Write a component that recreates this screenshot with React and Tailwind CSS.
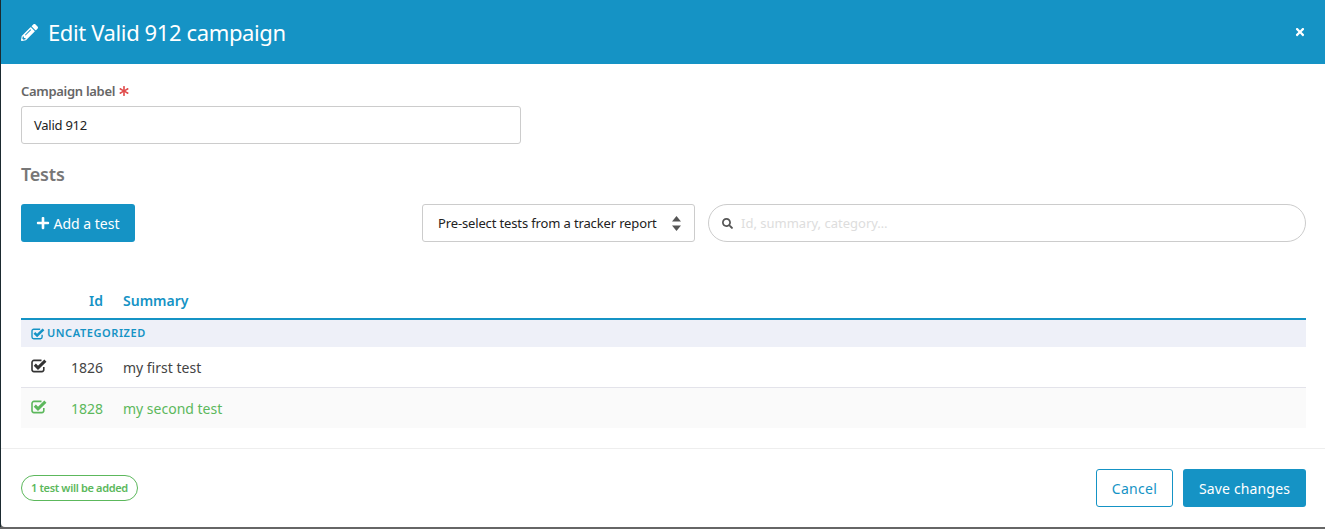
import React from "react";
import { FaPencilAlt, FaPlus, FaSearch, FaTimes, FaAsterisk } from "react-icons/fa";

function CheckBox({ className }) {
  return (
    <svg viewBox="0 0 16 14" className={className} fill="none">
      <path
        d="M12.8 8v2.6a2 2 0 0 1-2 2H3a2 2 0 0 1-2-2V3.4a2 2 0 0 1 2-2h7.5"
        stroke="currentColor"
        strokeWidth="1.6"
      />
      <path d="M3.8 5.6l3.2 3.2 7.4-7.2" stroke="currentColor" strokeWidth="3" />
    </svg>
  );
}

export default function App() {
  return (
    <div className="h-[529px] w-[1325px] overflow-hidden bg-[#666] font-['Noto_Sans',sans-serif]">
      <div className="flex h-[527px]">
        <div className="w-px bg-[#1b2a30]" />
        <div className="flex flex-1 flex-col overflow-hidden rounded-bl bg-white">
          {/* Header */}
          <div className="flex h-16 items-center justify-between bg-[#1593c5] pr-[19px] pl-5 text-white">
            <div className="flex items-center gap-[10px]">
              <FaPencilAlt className="h-[17px] w-[17px]" />
              <span className="text-[22px] tracking-[-0.38px]">Edit Valid 912 campaign</span>
            </div>
            <FaTimes className="h-3 w-3" />
          </div>

          {/* Body */}
          <div className="flex flex-1 flex-col pr-[19px] pl-5">
            <div className="mt-[19px] flex items-center gap-1 text-[13px] leading-4 font-semibold tracking-[-0.3px] text-[#666]">
              Campaign label <FaAsterisk className="-mt-px h-[10px] w-[10px] text-[#e04b4b]" />
            </div>
            <div className="mt-[7px] flex h-[38px] w-[500px] items-center rounded-[3px] border border-[#ccc] px-3 pt-0.5 text-[13px] tracking-[-0.25px] text-[#222]">
              Valid 912
            </div>

            <div className="mt-[18px] text-lg leading-6 font-semibold tracking-[-0.2px] text-[#777]">Tests</div>

            <div className="mt-[18px] flex items-center justify-between">
              <button className="flex h-[38px] w-[114px] items-center justify-center gap-[3px] rounded-[3px] bg-[#1593c5] pt-px text-sm text-white">
                <FaPlus className="-mt-px h-[14px] w-[14px]" />
                Add a test
              </button>
              <div className="flex items-center gap-[13px]">
                <div className="flex h-[38px] w-[273px] items-center justify-between rounded-[3px] border border-[#ccc] pr-[13px] pl-[15px] pt-px text-[13px] tracking-[-0.14px] text-[#222]">
                  Pre-select tests from a tracker report
                  <svg viewBox="0 0 9 15" className="h-[15px] w-[9px] text-[#555]" fill="currentColor">
                    <path d="M4.5 0L9 5.5H0Z" />
                    <path d="M0 9.5H9L4.5 15Z" />
                  </svg>
                </div>
                <div className="flex h-[38px] w-[598px] items-center gap-2 rounded-full border border-[#ccc] pl-[13px] pt-px text-[13px] text-[#ddd]">
                  <FaSearch className="-mt-px h-[11px] w-[11px] text-[#555]" />
                  Id, summary, category…
                </div>
              </div>
            </div>

            {/* Table */}
            <div className="mt-[44px]">
              <div className="flex h-[34px] items-center border-b-2 border-[#1593c5] pb-[2px] text-sm font-semibold text-[#1593c5]">
                <span className="w-[82px] text-right">Id</span>
                <span className="ml-5">Summary</span>
              </div>
              <div className="flex h-[27px] items-center gap-[2px] bg-[#eef0f8] pl-[10px] text-[11px] font-semibold tracking-[0.58px] text-[#1593c5]">
                <CheckBox className="h-3 w-3.5" />
                UNCATEGORIZED
              </div>
              <div className="flex h-[41px] items-center border-b border-[#e3e3ea] pt-px text-sm text-[#444]">
                <CheckBox className="-mt-[3px] ml-[10px] h-[14px] w-4 text-[#333]" />
                <span className="ml-[23px] w-[33px] text-right">1826</span>
                <span className="ml-5">my first test</span>
              </div>
              <div className="flex h-10 items-center bg-[#fafafa] pt-px text-sm text-[#5cb85c]">
                <CheckBox className="-mt-[3px] ml-[10px] h-[14px] w-4" />
                <span className="ml-[23px] w-[33px] text-right">1828</span>
                <span className="ml-5">my second test</span>
              </div>
            </div>
          </div>

          {/* Footer */}
          <div className="flex h-[79px] items-start justify-between border-t border-[#eee] pt-5 pr-[19px] pl-5">
            <span className="mt-[6px] flex h-[26px] items-center rounded-full border border-[#5cb85c] px-[9px] text-[11px] font-semibold tracking-[-0.35px] text-[#5cb85c]">
              1 test will be added
            </span>
            <div className="flex gap-[10px]">
              <button className="h-[38px] w-[77px] rounded-[3px] border border-[#1593c5] pt-px text-sm tracking-[0.3px] text-[#1593c5]">
                Cancel
              </button>
              <button className="h-[38px] w-[123px] rounded-[3px] bg-[#1593c5] pt-px text-sm tracking-[0.15px] text-white">
                Save changes
              </button>
            </div>
          </div>
        </div>
      </div>
    </div>
  );
}
